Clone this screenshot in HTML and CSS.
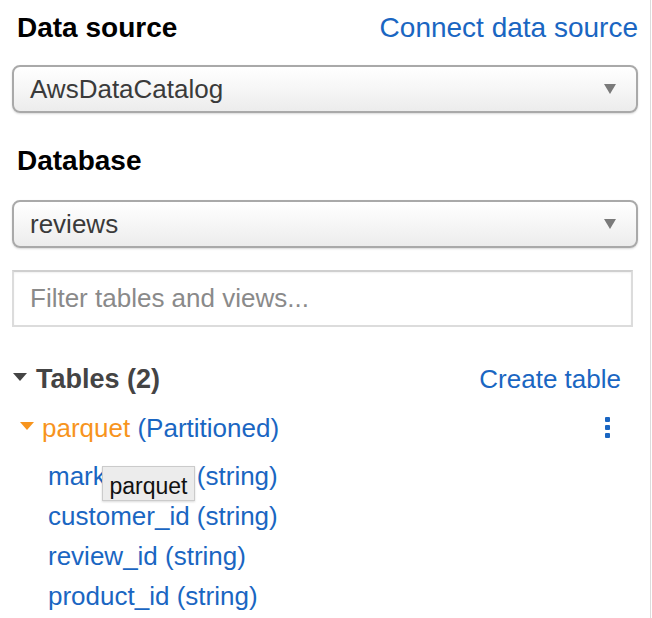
FILE: index.html
```html
<!DOCTYPE html>
<html>
<head>
<meta charset="utf-8">
<link rel="stylesheet" href="styles.css">
</head>
<body>
<div class="panel">
  <div class="head-row">
    <span class="label">Data source</span>
    <a class="link big">Connect data source</a>
  </div>
  <div class="select s1">
    <span>AwsDataCatalog</span>
    <span class="caret"></span>
  </div>
  <div class="head-row db">
    <span class="label">Database</span>
  </div>
  <div class="select s2">
    <span>reviews</span>
    <span class="caret"></span>
  </div>
  <div class="filter">Filter tables and views...</div>
  <div class="tables-row">
    <span class="tables-title"><span class="tri dark"></span>Tables (2)</span>
    <a class="link">Create table</a>
  </div>
  <div class="table-row">
    <span class="tname"><span class="tri orange"></span><span class="orange-text">parquet</span> <span class="blue">(Partitioned)</span></span>
    <span class="dots"><i></i><i></i><i></i></span>
  </div>
  <ul class="cols">
    <li>marketplace (string)</li>
    <li>customer_id (string)</li>
    <li>review_id (string)</li>
    <li>product_id (string)</li>
  </ul>
  <div class="tooltip">parquet</div>
</div>
</body>
</html>
```
FILE: styles.css
```css
html, body {
  margin: 0;
  padding: 0;
  background: #fff;
}
body {
  font-family: "Liberation Sans", Arial, sans-serif;
  width: 652px;
  height: 618px;
  overflow: hidden;
}
.panel {
  position: relative;
  width: 626px;
  height: 618px;
  padding: 12px 12px 0 12px;
  border-right: 1px solid #dcdcdc;
  box-sizing: content-box;
}
.head-row {
  display: flex;
  justify-content: space-between;
  align-items: baseline;
  padding-left: 5px;
  line-height: 32px;
}
.label {
  font-weight: bold;
  font-size: 28px;
  color: #000;
}
.link {
  color: #1a66c2;
  font-size: 26px;
  text-decoration: none;
}
.link.big {
  font-size: 28px;
}
.select {
  margin-top: 21px;
  height: 44px;
  border: 2px solid #a9a9a9;
  border-radius: 8px;
  background: linear-gradient(#ffffff 0%, #f7f7f7 45%, #ececec 100%);
  box-shadow: 0 1px 2px rgba(0,0,0,0.15);
  display: flex;
  align-items: center;
  justify-content: space-between;
  padding: 0 20px 0 16px;
  font-size: 26px;
  color: #3a3a3a;
}
.caret {
  width: 0;
  height: 0;
  border-left: 6px solid transparent;
  border-right: 6px solid transparent;
  border-top: 10px solid #7a7a7a;
}
.db {
  margin-top: 32px;
}
.s2 {
  margin-top: 23px;
}
.filter {
  margin-top: 22px;
  height: 53px;
  border: 2px solid #dcdcdc;
  border-top-color: #cfcfcf;
  box-shadow: inset 0 1px 2px rgba(0,0,0,0.06);
  font-size: 26px;
  color: #8a8a8a;
  padding-left: 16px;
  box-sizing: content-box;
  display: flex;
  align-items: center;
  width: 601px;
}
.tables-row {
  margin-top: 32px;
  display: flex;
  justify-content: space-between;
  align-items: baseline;
  line-height: 40px;
  padding-right: 17px;
}
.tables-title {
  font-weight: bold;
  font-size: 27px;
  color: #444;
}
.tri {
  display: inline-block;
  width: 0;
  height: 0;
  border-left: 7px solid transparent;
  border-right: 7px solid transparent;
  vertical-align: middle;
}
.tri.dark {
  border-top: 8px solid #444;
  margin: 0 9px 0 1px;
  position: relative;
  top: -4px;
}
.tri.orange {
  border-top: 8px solid #f7941d;
  margin: 0 8px 0 8px;
  position: relative;
  top: -4px;
}
.table-row {
  margin-top: 9px;
  display: flex;
  justify-content: space-between;
  align-items: center;
  line-height: 40px;
  padding-right: 28px;
}
.tname {
  font-size: 26px;
}
.orange-text {
  color: #f7941d;
}
.blue {
  color: #1a66c2;
}
.dots {
  display: flex;
  flex-direction: column;
  gap: 3px;
  position: relative;
  top: -1px;
}
.dots i {
  display: block;
  width: 5px;
  height: 5px;
  border-radius: 1px;
  background: #1a66c2;
}
.cols {
  list-style: none;
  margin: 8px 0 0 0;
  padding: 0 0 0 36px;
}
.cols li {
  font-size: 26px;
  line-height: 40px;
  color: #1a66c2;
}
.tooltip {
  position: absolute;
  left: 102px;
  top: 466px;
  width: 93px;
  height: 35px;
  box-sizing: border-box;
  background: #ececec;
  border: 1px solid #cbcbcb;
  box-shadow: 0 1px 2px rgba(0,0,0,0.15);
  font-size: 23px;
  line-height: 38px;
  color: #111;
  text-align: center;
}
```
